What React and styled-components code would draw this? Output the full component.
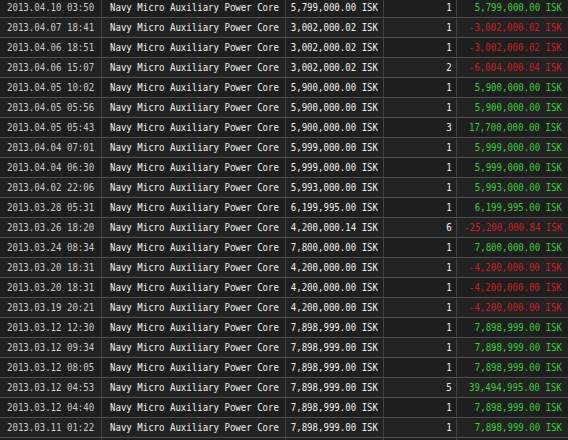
import React from "react";
import styled, { createGlobalStyle } from "styled-components";

const Global = createGlobalStyle`
  html, body { margin: 0; padding: 0; background: #1f1f1f; overflow: hidden; }
  body { width: 568px; height: 440px; }
`;

const Table = styled.div`
  display: grid;
  grid-template-columns: 102px 184px 98px 73px 111px;
  margin-top: -2px;
  width: 568px;
  font-family: "DejaVu Sans Mono", "Liberation Mono", monospace;
  font-size: 11px;
`;

const Cell = styled.div`
  box-sizing: border-box;
  height: 20px;
  display: flex;
  align-items: center;
  justify-content: ${(p) => (p.$right ? "flex-end" : "flex-start")};
  border-bottom: 1px solid #505050;
  border-right: ${(p) => (p.$last ? "none" : "1px solid #424242")};
  background: ${(p) => (p.$alt ? "#222222" : "#1e1e1e")};
  padding: ${(p) => p.$pad || "0 6px"};
  color: ${(p) => p.$color || "#e6e6e6"};
  white-space: nowrap;
  overflow: hidden;
`;

const Text = styled.span`
  flex: none;
  display: block;
  line-height: 19px;
  transform: scaleX(0.823);
  transform-origin: ${(p) => (p.$right ? "right center" : "left center")};
`;

const rows = [
  ["2013.04.10 03:50", "5,799,000.00", "1", "5,799,000.00"],
  ["2013.04.07 18:41", "3,002,000.02", "1", "-3,002,000.02"],
  ["2013.04.06 18:51", "3,002,000.02", "1", "-3,002,000.02"],
  ["2013.04.06 15:07", "3,002,000.02", "2", "-6,004,000.04"],
  ["2013.04.05 10:02", "5,900,000.00", "1", "5,900,000.00"],
  ["2013.04.05 05:56", "5,900,000.00", "1", "5,900,000.00"],
  ["2013.04.05 05:43", "5,900,000.00", "3", "17,700,000.00"],
  ["2013.04.04 07:01", "5,999,000.00", "1", "5,999,000.00"],
  ["2013.04.04 06:30", "5,999,000.00", "1", "5,999,000.00"],
  ["2013.04.02 22:06", "5,993,000.00", "1", "5,993,000.00"],
  ["2013.03.28 05:31", "6,199,995.00", "1", "6,199,995.00"],
  ["2013.03.26 18:20", "4,200,000.14", "6", "-25,200,000.84"],
  ["2013.03.24 08:34", "7,800,000.00", "1", "7,800,000.00"],
  ["2013.03.20 18:31", "4,200,000.00", "1", "-4,200,000.00"],
  ["2013.03.20 18:31", "4,200,000.00", "1", "-4,200,000.00"],
  ["2013.03.19 20:21", "4,200,000.00", "1", "-4,200,000.00"],
  ["2013.03.12 12:30", "7,898,999.00", "1", "7,898,999.00"],
  ["2013.03.12 09:34", "7,898,999.00", "1", "7,898,999.00"],
  ["2013.03.12 08:05", "7,898,999.00", "1", "7,898,999.00"],
  ["2013.03.12 04:53", "7,898,999.00", "5", "39,494,995.00"],
  ["2013.03.12 04:40", "7,898,999.00", "1", "7,898,999.00"],
  ["2013.03.11 01:22", "7,898,999.00", "1", "7,898,999.00"],
];

export default function App() {
  return (
    <>
      <Global />
      <Table>
        {rows.map((r, i) => {
          const neg = r[3].startsWith("-");
          const alt = i % 2 === 1;
          return (
            <React.Fragment key={i}>
              <Cell $alt={alt} $pad="0 0 0 7px" $color="#c8c8c8"><Text>{r[0]}</Text></Cell>
              <Cell $alt={alt} $pad="0 0 0 8px" $color="#f0f0f0"><Text>Navy Micro Auxiliary Power Core</Text></Cell>
              <Cell $alt={alt} $right $pad="0 5px 0 0" $color="#f0f0f0"><Text $right>{r[1]} ISK</Text></Cell>
              <Cell $alt={alt} $right $pad="0 4px 0 0" $color="#f0f0f0"><Text $right>{r[2]}</Text></Cell>
              <Cell $alt={alt} $right $last $pad="0 6px 0 0" $color={neg ? "#d01e1e" : "#30d030"}><Text $right>{r[3]} ISK</Text></Cell>
            </React.Fragment>
          );
        })}
        <Cell /><Cell /><Cell /><Cell /><Cell $last />
      </Table>
    </>
  );
}
